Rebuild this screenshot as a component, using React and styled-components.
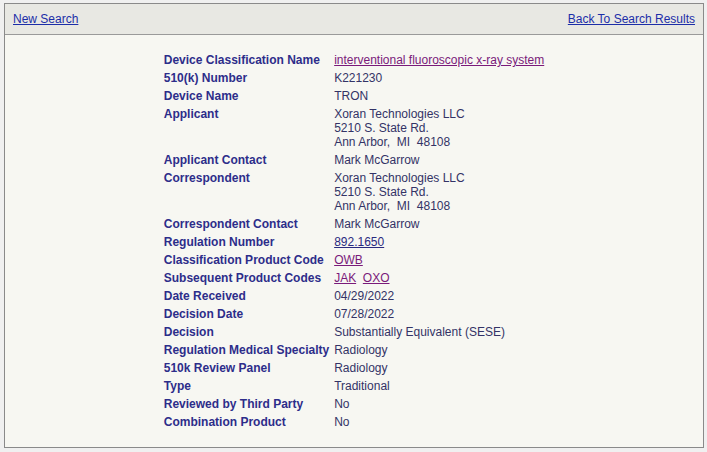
import React from "react";
import styled, { createGlobalStyle } from "styled-components";

const Global = createGlobalStyle`
  html, body { margin: 0; padding: 0; background: #f0f0f0; }
  body { font-family: "Liberation Sans", Arial, sans-serif; font-size: 12px; }
`;

const Page = styled.div`
  padding: 3px 3px 4px 4px;
`;

const Box = styled.div`
  width: 698px;
  height: 443px;
  border: 1px solid #8a8a8a;
  background: #f7f7f2;
  display: flex;
  flex-direction: column;
`;

const Header = styled.div`
  height: 30px;
  background: #e8e8e3;
  border-bottom: 1px solid #9a9a9a;
  display: flex;
  align-items: center;
  justify-content: space-between;
  padding: 0 8px 0 8px;
`;

const NavLink = styled.a`
  color: #1c2ea8;
  text-decoration: underline;
  font-size: 12px;
  line-height: 14px;
  cursor: pointer;
`;

const Content = styled.div`
  padding-top: 18px;
  display: flex;
  justify-content: center;
`;

const Grid = styled.div`
  display: grid;
  grid-template-columns: auto auto;
  column-gap: 5px;
  row-gap: 4px;
`;

const Label = styled.div`
  font-weight: bold;
  color: #2d2d8a;
  line-height: 14px;
  white-space: nowrap;
`;

const Value = styled.div`
  color: #333366;
  line-height: 14px;
  white-space: nowrap;
`;

const Link = styled.a`
  color: ${(p) => (p.$visited ? "#7a1a7a" : "#2a2a80")};
  text-decoration: underline;
  cursor: pointer;
`;

const rows = [
  ["Device Classification Name", <Link $visited>interventional fluoroscopic x-ray system</Link>],
  ["510(k) Number", "K221230"],
  ["Device Name", "TRON"],
  ["Applicant", <>Xoran Technologies LLC<br />5210 S. State Rd.<br />Ann Arbor,&nbsp; MI&nbsp; 48108</>],
  ["Applicant Contact", "Mark McGarrow"],
  ["Correspondent", <>Xoran Technologies LLC<br />5210 S. State Rd.<br />Ann Arbor,&nbsp; MI&nbsp; 48108</>],
  ["Correspondent Contact", "Mark McGarrow"],
  ["Regulation Number", <Link>892.1650</Link>],
  ["Classification Product Code", <Link $visited>OWB</Link>],
  ["Subsequent Product Codes", <><Link $visited>JAK</Link>&nbsp; <Link $visited>OXO</Link></>],
  ["Date Received", "04/29/2022"],
  ["Decision Date", "07/28/2022"],
  ["Decision", "Substantially Equivalent (SESE)"],
  ["Regulation Medical Specialty", "Radiology"],
  ["510k Review Panel", "Radiology"],
  ["Type", "Traditional"],
  ["Reviewed by Third Party", "No"],
  ["Combination Product", "No"],
];

export default function App() {
  return (
    <>
      <Global />
      <Page>
        <Box>
          <Header>
            <NavLink>New Search</NavLink>
            <NavLink>Back To Search Results</NavLink>
          </Header>
          <Content>
            <Grid>
              {rows.map(([l, v], i) => (
                <React.Fragment key={i}>
                  <Label>{l}</Label>
                  <Value>{v}</Value>
                </React.Fragment>
              ))}
            </Grid>
          </Content>
        </Box>
      </Page>
    </>
  );
}
